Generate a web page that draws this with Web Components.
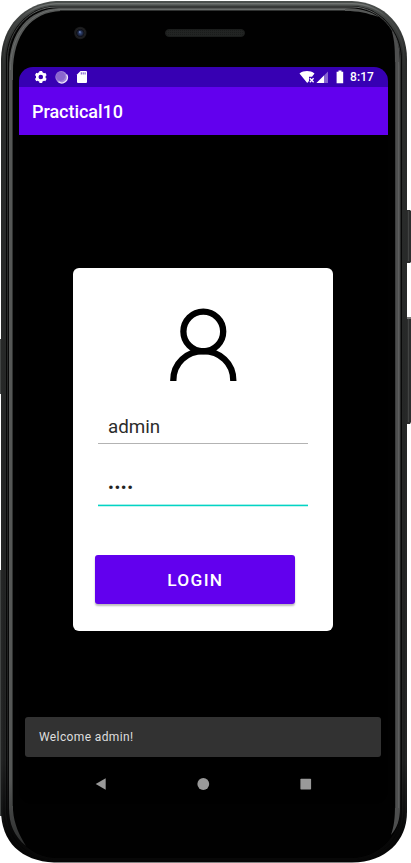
<!DOCTYPE html>
<html lang="en"><head><meta charset="utf-8"><title>Practical10</title>
<style>html,body{margin:0;width:411px;height:863px;overflow:hidden;background:#fff;font-family:Roboto,"Liberation Sans",sans-serif}</style></head><body>
<phone-frame>
<status-bar></status-bar>
<app-bar>Practical10</app-bar>
<main-area>
<login-card>
<user-icon></user-icon>
<text-field>admin</text-field>
<text-field active>••••</text-field>
<login-button>LOGIN</login-button>
</login-card>
<snack-bar>Welcome admin!</snack-bar>
</main-area>
<nav-bar></nav-bar>
</phone-frame>
<script>
const define=(name,html)=>customElements.define(name,class extends HTMLElement{
  constructor(){super();const t=document.createElement('template');t.innerHTML=html;this.attachShadow({mode:'open'}).append(t.content.cloneNode(true));}
});
define('phone-frame',`<style>
:host{display:block;position:relative;width:411px;height:863px;box-sizing:border-box;padding:67px 23px 59px 19px}
.bezel{position:absolute;left:0;top:0}
.screen{position:relative;display:flex;flex-direction:column;width:369px;height:737px;border-radius:14px;overflow:hidden;background:#000}
</style>
<svg class="bezel" width="411" height="863" viewBox="0 0 411 863">
<defs>
<linearGradient id="top" x1="0" x2="0" y1="0" y2="1"><stop offset="0" stop-color="#4c504e"/><stop offset=".06" stop-color="#2a2c2b"/><stop offset=".88" stop-color="#232424"/><stop offset=".94" stop-color="#121313"/><stop offset=".97" stop-color="#050505"/></linearGradient>
<linearGradient id="rim" gradientUnits="userSpaceOnUse" x1="0" x2="0" y1="0" y2="863"><stop offset="0" stop-color="#7a7e7c"/><stop offset=".02" stop-color="#484a49"/><stop offset=".08" stop-color="#2d2f2e"/><stop offset=".88" stop-color="#1c1d1d"/><stop offset=".95" stop-color="#090909"/><stop offset="1" stop-color="#060606"/></linearGradient>
<linearGradient id="shineL" gradientUnits="userSpaceOnUse" x1="0" x2="0" y1="780" y2="846"><stop offset="0" stop-color="#555756"/><stop offset="1" stop-color="#2c2d2d"/></linearGradient>
<radialGradient id="lens"><stop offset="0" stop-color="#3d5386"/><stop offset=".35" stop-color="#202b4b"/><stop offset=".6" stop-color="#0e1017"/><stop offset=".72" stop-color="#202022"/><stop offset="1" stop-color="#17181a"/></radialGradient>
<pattern id="mesh" width="2" height="2" patternUnits="userSpaceOnUse"><path d="M0 0h2v2H0z" fill="#222423"/><path d="M0 0h1v1H0z" fill="#1a1c1b"/></pattern>
</defs>
<path d="M0 339h2v55H0zM0 570h2v246H0z" fill="#424544"/>
<path d="M406 210h4l1 1v51l-1 1h-4zM406 317h4l1 1v104l-1 2h-4z" fill="#2c2d2d"/>
<path d="M408.5 211v50M408.5 319v103" stroke="#424443"/><path d="M407 318h4" stroke="#777" stroke-width="2"/>
<path d="M56 1H352C385 2 407 27 407 59V812C407 841 386 862 352 862.5H54C21 861 1 842 1 810V59C2 26 24 3 56 1Z" fill="url(#top)"/>
<path d="M56 3.8H352C382 4 404 28 404 59V812C404 838 382 860 352 860H54C25 859 4 838 4 810V59C4 28 26 5 56 3.8Z" fill="none" stroke="url(#rim)" stroke-width="1.4"/>
<path d="M56 6H352C380 6 402 31 402 60V811C402 838 380 860 352 860H55C29 860 6 838 6 809V60C6 31 28 6 56 6Z" fill="#080808"/>
<path d="M56 7H352C379 7 400.5 31 400.5 60V811C400.5 838 379 859 352 859H56C30 859 7.5 838 7.5 809V60C7.5 31 29 7 56 7Z" fill="none" stroke="url(#rim)" stroke-width="1"/>
<path d="M56 8H352C378 8 400 32 400 60V811C400 836 378 858 352 858H56C31 858 9 836 9 809V60C9 32 30 8 56 8Z" fill="#010101"/>
<path d="M9 70C9 31 29 9 59 8H345C359 8 370 11 379 17C366 13 360 11 345 11H61C31 12 13 35 13 72V810C14 825 20 836 26 846C14 836 9 824 9 808Z" fill="url(#shineL)"/>
<path d="M12.5 80V806M60 10.5H345" fill="none" stroke="#303231"/>
<path d="M10.5 70C10 35 31 9.5 60 9.5H345" fill="none" stroke="#6a6d6c"/>
<path d="M391.5 30C398 38 400 48 400 66V808C400 820 397 828 391 835C394 826 395 819 395 804V68C395 50 395 42 391.5 30Z" fill="#4d4e4e"/>
<path d="M398.5 62V808" stroke="#5c5d5d"/><path d="M395.5 62V808" stroke="#3c3d3d"/>
<circle cx="80.3" cy="33" r="6.2" fill="url(#lens)"/><circle cx="79.8" cy="32" r="1" fill="#6078ad"/>
<rect x="165.5" y="29.5" width="79" height="7" rx="3.5" fill="url(#mesh)" stroke="#1b1d1c"/>
</svg><div class="screen"><slot></slot></div>`);
define('status-bar',`<style>
:host{display:flex;flex:none;align-items:center;justify-content:space-between;height:20px;box-sizing:border-box;background:#3700b3;color:#fff;padding:0 14px 0 15px;font-weight:500;font-size:12px;letter-spacing:.1px}
.r{display:flex;align-items:center}svg{display:block}
</style><svg width="56" height="20" viewBox="34 67 56 20">
<circle cx="40.8" cy="77" r="3.6" fill="none" stroke="#fff" stroke-width="2.6"/>
<path d="M40.8 71v2.5M40.8 80.5V83M35.6 74l2.2 1.25M43.8 78.75L46 80M46 74l-2.2 1.25M37.8 78.75L35.6 80" stroke="#fff" stroke-width="2.9"/>
<circle cx="61.3" cy="77" r="6" fill="#a083d8"/><circle cx="60.6" cy="76.3" r="4.6" fill="#8a66ce"/><path d="M66.6 74.5A5.6 5.6 0 0 1 58.4 81.8" fill="none" stroke="#eee5fb" stroke-width="1.4"/>
<path d="M80.5 71H86a1 1 0 0 1 1 1v10a1 1 0 0 1-1 1h-8a1 1 0 0 1-1-1v-7.5Z" fill="#fff"/><path d="M81.3 72.3V74.5M83.2 72.3V74.5M85.1 72.3V74.5" stroke="#3700b3" stroke-width=".7"/>
</svg><div class="r"><svg width="51" height="20" viewBox="299.5 67 51 20">
<path d="M300 73.5C304.5 70.3 310.5 70.3 315 73.5L312.5 76.8H309.5V81L307.7 83Z" fill="#fff"/><path d="M310.3 78.2l3.8 4M314.1 78.2l-3.8 4" stroke="#fff" stroke-width="1.3"/>
<path d="M317 83L328.5 71.5V83Z" fill="#8764d0"/><path d="M317 83L324.5 75.5V83Z" fill="#fff"/>
<path d="M339 70.5h3v1.3h1.7v11.4h-6.6V71.8H339Z" fill="#fff"/></svg><span>8:17</span></div>`);
define('app-bar',`<style>:host{display:flex;flex:none;align-items:center;height:48px;box-sizing:border-box;padding:1px 0 0 13px;background:#6200ee;color:#fff;font-size:18px;font-weight:500;letter-spacing:-.04px}</style><slot></slot>`);
define('main-area',`<style>:host{display:flex;flex:none;flex-direction:column;justify-content:space-between;align-items:flex-start;box-sizing:border-box;height:621.5px;padding:133px 0 0 6px}::slotted(login-card){margin-left:48px}</style><slot></slot>`);
define('login-card',`<style>:host{display:flex;flex:none;flex-direction:column;align-items:flex-start;box-sizing:border-box;width:260.3px;height:363px;background:#fff;border-radius:6px;padding:40px 0 0 25px}
::slotted(user-icon){margin-left:72px}::slotted(login-button){margin:48.5px 0 0 -3px}</style><slot></slot>`);
define('user-icon',`<style>:host{display:block;height:74px}svg{display:block}</style><svg width="67" height="74" viewBox="0 0 67 74" fill="none" stroke="#000" stroke-width="6.3"><circle cx="33.3" cy="23.5" r="19.9"/><path d="M3.3 73V72.5C3.3 55 17 43.2 33.3 43.2S63.3 55 63.3 72.5V73"/></svg>`);
define('text-field',`<style>:host{display:flex;flex:none;align-items:center;box-sizing:border-box;width:210px;height:62px;padding:28px 0 0 10px;border-bottom:1px solid #b3b3b3;font-size:18.8px;color:#2c2c2c}
:host([active]){height:62.5px;padding-top:23px;letter-spacing:.6px;border:0;background:linear-gradient(#a5eee8,#a5eee8) 0 60px/100% 1px no-repeat,linear-gradient(#03d4c5,#03d4c5) 0 61px/100% 1px no-repeat,linear-gradient(#c5f4f0,#c5f4f0) 0 62px/100% 1px no-repeat;font-size:17.2px;color:#222}</style><slot></slot>`);
define('login-button',`<style>:host{display:flex;align-items:center;justify-content:center;box-sizing:border-box;width:199.7px;height:49px;padding:1px 0 0 1px;border-radius:3px;background:#6200ee;color:#fff;font-size:17.3px;font-weight:500;letter-spacing:1.3px;box-shadow:0 2px 2px #0004}</style><slot></slot>`);
define('snack-bar',`<style>:host{display:flex;align-items:center;box-sizing:border-box;width:356px;height:39.5px;padding:1px 0 0 14px;border-radius:3px;background:#323232;color:#dedede;font-size:12px;letter-spacing:.38px}</style><slot></slot>`);
define('nav-bar',`<style>:host{display:flex;flex:none;justify-content:space-between;align-items:center;box-sizing:border-box;width:293px;height:47.5px;padding:7.5px 0 0 76px}svg{display:block;overflow:visible}</style>
<svg width="12" height="12"><path d="M.7 6L10.7.3V11.7Z" fill="#999"/></svg><svg width="12" height="12"><circle cx="5.3" cy="6" r="5.9" fill="#999"/></svg><svg width="12" height="12"><rect x=".4" y=".7" width="10.7" height="10.7" rx=".7" fill="#999"/></svg>`);
</script></body></html>
